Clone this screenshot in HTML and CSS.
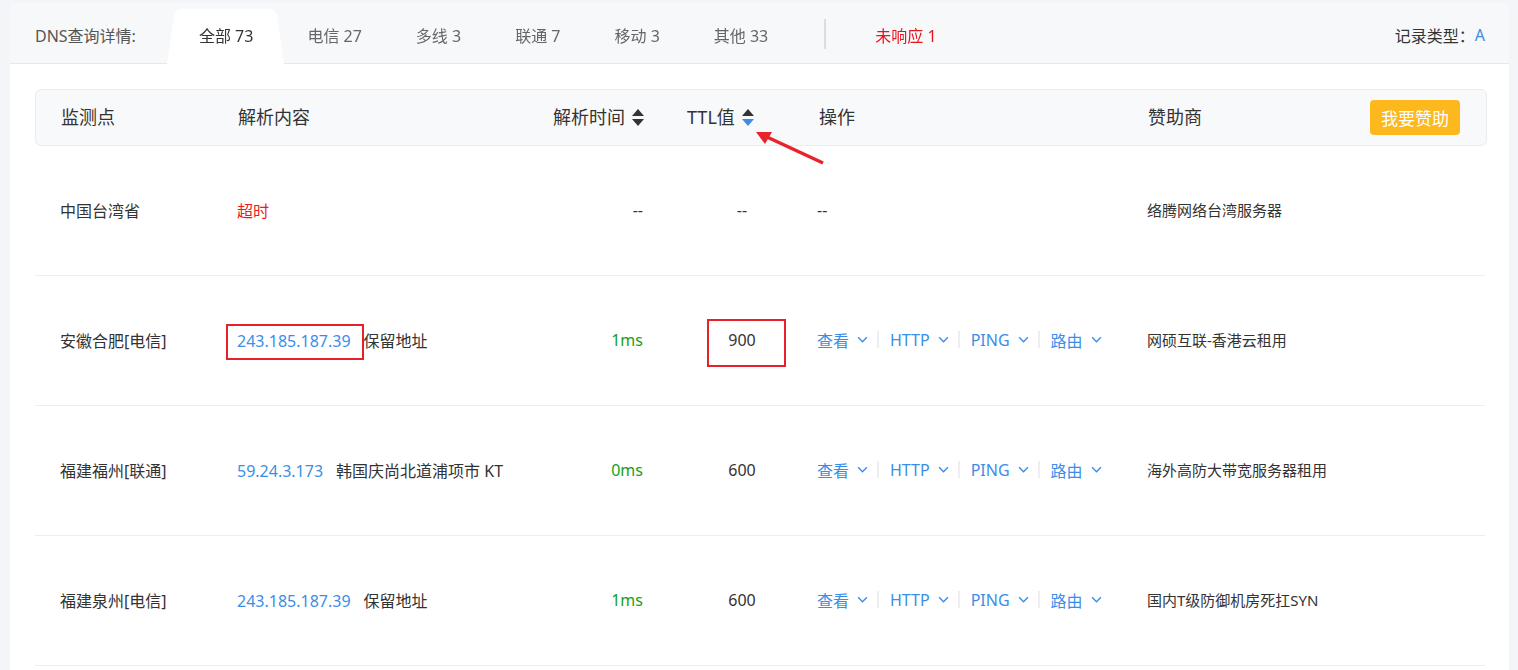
FILE: index.html
```html
<!DOCTYPE html>
<html lang="zh-CN">

<head>
  <meta charset="utf-8" />
  <title>DNS查询详情</title>
  <meta name="viewport" content="width=device-width, initial-scale=1" />
  <link rel="stylesheet" href="styles.css">
</head>

<body>
  <div class="card">
    <div class="tabs-bar">
      <span class="tabs-label">DNS查询详情:</span>
      <div class="tabs">
        <span class="tab active"><span>全部 73</span></span>
        <span class="tab">电信 27</span>
        <span class="tab">多线 3</span>
        <span class="tab">联通 7</span>
        <span class="tab">移动 3</span>
        <span class="tab">其他 33</span>
      </div>
      <span class="tab-sep"></span>
      <span class="tab tab-fail">未响应 1</span>
      <div class="record-type">记录类型：<span class="blue">A</span></div>
    </div>

    <div class="table">
      <div class="grid thead">
        <div>监测点</div>
        <div>解析内容</div>
        <div class="col-time">解析时间 <i class="sort"><b class="up"></b><b class="down"></b></i></div>
        <div class="col-ttl">TTL值 <i class="sort"><b class="up"></b><b class="down on"></b></i></div>
        <div class="col-ops">操作</div>
        <div class="col-sponsor">赞助商 <button class="btn-sponsor">我要赞助</button></div>
      </div>

      <div class="grid trow">
        <div>中国台湾省</div>
        <div><span class="red">超时</span></div>
        <div class="col-time">--</div>
        <div class="col-ttl">--</div>
        <div class="col-ops">--</div>
        <div class="sponsor">络腾网络台湾服务器</div>
      </div>

      <div class="grid trow">
        <div>安徽合肥[电信]</div>
        <div><span class="ip marked">243.185.187.39</span><span class="addr">保留地址</span></div>
        <div class="col-time green">1ms</div>
        <div class="col-ttl"><span class="ttl marked">900</span></div>
        <div class="col-ops">
          <span class="op">查看 <svg class="chev" viewBox="0 0 10 6"><path d="M1 1 5 5 9 1" /></svg></span><span class="op-sep"></span>
          <span class="op">HTTP <svg class="chev" viewBox="0 0 10 6"><path d="M1 1 5 5 9 1" /></svg></span><span class="op-sep"></span>
          <span class="op">PING <svg class="chev" viewBox="0 0 10 6"><path d="M1 1 5 5 9 1" /></svg></span><span class="op-sep"></span>
          <span class="op">路由 <svg class="chev" viewBox="0 0 10 6"><path d="M1 1 5 5 9 1" /></svg></span>
        </div>
        <div class="sponsor">网硕互联-香港云租用</div>
      </div>

      <div class="grid trow">
        <div>福建福州[联通]</div>
        <div><span class="ip">59.24.3.173</span><span class="addr">韩国庆尚北道浦项市 KT</span></div>
        <div class="col-time green">0ms</div>
        <div class="col-ttl">600</div>
        <div class="col-ops">
          <span class="op">查看 <svg class="chev" viewBox="0 0 10 6"><path d="M1 1 5 5 9 1" /></svg></span><span class="op-sep"></span>
          <span class="op">HTTP <svg class="chev" viewBox="0 0 10 6"><path d="M1 1 5 5 9 1" /></svg></span><span class="op-sep"></span>
          <span class="op">PING <svg class="chev" viewBox="0 0 10 6"><path d="M1 1 5 5 9 1" /></svg></span><span class="op-sep"></span>
          <span class="op">路由 <svg class="chev" viewBox="0 0 10 6"><path d="M1 1 5 5 9 1" /></svg></span>
        </div>
        <div class="sponsor">海外高防大带宽服务器租用</div>
      </div>

      <div class="grid trow">
        <div>福建泉州[电信]</div>
        <div><span class="ip">243.185.187.39</span><span class="addr">保留地址</span></div>
        <div class="col-time green">1ms</div>
        <div class="col-ttl">600</div>
        <div class="col-ops">
          <span class="op">查看 <svg class="chev" viewBox="0 0 10 6"><path d="M1 1 5 5 9 1" /></svg></span><span class="op-sep"></span>
          <span class="op">HTTP <svg class="chev" viewBox="0 0 10 6"><path d="M1 1 5 5 9 1" /></svg></span><span class="op-sep"></span>
          <span class="op">PING <svg class="chev" viewBox="0 0 10 6"><path d="M1 1 5 5 9 1" /></svg></span><span class="op-sep"></span>
          <span class="op">路由 <svg class="chev" viewBox="0 0 10 6"><path d="M1 1 5 5 9 1" /></svg></span>
        </div>
        <div class="sponsor">国内T级防御机房死扛SYN</div>
      </div>

      <!-- annotation arrow pointing at the TTL sort icon -->
      <svg class="note-arrow" width="90" height="45" viewBox="0 0 90 45">
        <line x1="78" y1="38" x2="22" y2="12" />
        <polygon points="11,7 27,7 20,19" />
      </svg>
    </div>
  </div>
</body>

</html>
```

FILE: styles.css
```css
/* Reset & global */
* {
  box-sizing: border-box;
  margin: 0;
  padding: 0;
}

body {
  height: 670px;
  overflow: hidden;
  padding: 3px 9px 0 10px;
  background-color: #f3f5f8;
  color: #333;
  font-family: "Noto Sans", "Noto Sans CJK SC", sans-serif;
}

.card {
  min-height: 700px;
  background-color: #fff;
  border-radius: 4px 4px 0 0;
}

/* Tabs bar */
.tabs-bar {
  display: flex;
  align-items: stretch;
  height: 61px;
  padding: 0 24px 0 25px;
  background-color: #f7f8fa;
  border-bottom: 1px solid #e6e8ec;
  border-radius: 4px 4px 0 0;
  font-size: 16px;
}

.tabs-label {
  display: flex;
  align-items: center;
  padding-top: 4px;
  margin-right: 36px;
  color: #555;
}

.tabs {
  display: flex;
}

.tab {
  position: relative;
  z-index: 0;
  display: flex;
  align-items: center;
  padding: 4px 27px 0;
  color: #666;
}

.tab.active {
  color: #333;
}

.tab.active::before {
  content: "";
  position: absolute;
  z-index: -1;
  top: -5px;
  bottom: -1px;
  left: -5px;
  right: -4px;
  background-color: #fff;
  border-radius: 9px 9px 0 0;
  transform-origin: bottom center;
  transform: perspective(100px) rotateX(14deg);
}

.tab-sep {
  align-self: center;
  width: 2px;
  height: 30px;
  margin: 2px 22px 0 29px;
  background-color: #dcdde0;
}

.tab-fail {
  color: #e8141b;
}

.record-type {
  display: flex;
  align-items: center;
  padding-top: 4px;
  margin-left: auto;
  color: #333;
}

.blue {
  color: #3b8ee8;
}

.red {
  color: #ec1c24;
}

.green {
  color: #13a11c;
}

/* Table */
.table {
  position: relative;
  margin: 25px 22px 0 25px;
}

.grid {
  display: grid;
  grid-template-columns: 177px 303px 146px 112px 349px 1fr;
  align-items: center;
  padding: 0 26px 0 25px;
}

.thead {
  height: 57px;
  padding-bottom: 3px;
  background-color: #f8f9fb;
  border: 1px solid #e9ebef;
  border-radius: 6px;
  font-size: 18px;
}

.trow {
  height: 130px;
  margin-right: 2px;
  padding-bottom: 2px;
  border-bottom: 1px solid #ebedf0;
  font-size: 16px;
}

.col-time {
  display: flex;
  align-items: center;
  justify-content: flex-end;
  padding-right: 43px;
}

.thead .col-ttl {
  display: flex;
  align-items: center;
}

.trow .col-ttl {
  text-align: center;
}

.thead .col-ops {
  padding-left: 20px;
}

.trow .col-ops {
  display: flex;
  align-items: center;
  padding-left: 19px;
  color: #333;
}

.col-sponsor {
  display: flex;
  align-items: center;
  justify-content: space-between;
}

.sponsor {
  font-size: 15px;
}

/* sort icon */
.sort {
  display: inline-flex;
  flex-direction: column;
  gap: 3px;
  margin-left: 7px;
  margin-top: 3px;
}

.sort b {
  display: block;
  width: 0;
  height: 0;
  border-left: 6px solid transparent;
  border-right: 6px solid transparent;
}

.sort .up {
  border-bottom: 7px solid #333;
}

.sort .down {
  border-top: 7px solid #333;
}

.sort .down.on {
  border-top-color: #3b8ee8;
}

.btn-sponsor {
  width: 90px;
  height: 35px;
  margin-top: 2px;
  border: none;
  border-radius: 4px;
  background-color: #fdb81d;
  color: #fff;
  font-family: inherit;
  font-size: 17px;
  cursor: pointer;
}

/* resolve content */
.ip {
  position: relative;
  display: inline-block;
  line-height: 20px;
  color: #3b8ee8;
}

.addr {
  margin-left: 13px;
}

.ttl {
  position: relative;
  display: inline-block;
}

/* red annotation frames */
.marked::after {
  content: "";
  position: absolute;
  border: 2px solid #e5212a;
}

.ip.marked::after {
  top: -7px;
  bottom: -9px;
  left: -11px;
  right: -13px;
}

.ttl.marked::after {
  top: 50%;
  left: 50%;
  width: 75px;
  height: 44px;
  margin-top: -21px;
  margin-left: -35px;
}

/* operations */
.op {
  display: inline-flex;
  align-items: center;
  gap: 8px;
  color: #3b8ee8;
}

.chev {
  width: 11px;
  height: 7px;
  fill: none;
  stroke: #3b8ee8;
  stroke-width: 1.3;
}

.op-sep {
  width: 2px;
  height: 17px;
  margin: 0 11px 0 9px;
  background-color: #eceef2;
}

.note-arrow {
  position: absolute;
  left: 710px;
  top: 36px;
}

.note-arrow line {
  stroke: #e8242a;
  stroke-width: 3.5;
}

.note-arrow polygon {
  fill: #e8242a;
}
```
